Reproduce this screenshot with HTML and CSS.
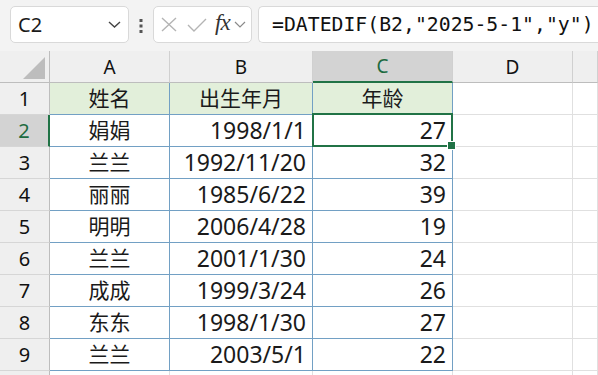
FILE: index.html
```html
<!DOCTYPE html>
<html lang="zh-CN">
<head>
  <meta charset="UTF-8">
  <meta name="viewport" content="width=device-width, initial-scale=1.0">
  <title>DATEDIF</title>
  <link rel="stylesheet" href="styles.css">
</head>
<body>

  <div class="toolbar">
    <div class="namebox">
      <span>C2</span>
      <svg class="chev" width="13" height="7" viewBox="0 0 13 7"><polyline points="1,1 6.5,6 12,1" fill="none" stroke="#444" stroke-width="1.4"/></svg>
    </div>
    <svg class="grip" width="4" height="14" viewBox="0 0 4 14">
      <rect x="0.5" y="0" width="3" height="3" fill="#555"/>
      <rect x="0.5" y="5.5" width="3" height="3" fill="#555"/>
      <rect x="0.5" y="11" width="3" height="3" fill="#555"/>
    </svg>
    <div class="fnbox">
      <svg width="16" height="15" viewBox="0 0 16 15"><path d="M1 1 L15 14 M15 1 L1 14" stroke="#b4b4b4" stroke-width="1.4" fill="none"/></svg>
      <svg class="ok" width="20" height="14" viewBox="0 0 20 14"><polyline points="1,7 7,13 19,1" fill="none" stroke="#b4b4b4" stroke-width="1.4"/></svg>
      <span class="fx">fx</span>
      <svg class="fx-chev" width="12" height="7" viewBox="0 0 12 7"><polyline points="1,1 6,6 11,1" fill="none" stroke="#8a8a8a" stroke-width="1.2"/></svg>
    </div>
    <div class="formula">=DATEDIF(B2,"2025-5-1","y")</div>
  </div>

  <div class="sheet">
    <!-- column headers -->
    <div class="hd corner"><span class="tri"></span></div>
    <div class="hd">A</div>
    <div class="hd">B</div>
    <div class="hd active">C</div>
    <div class="hd">D</div>
    <div class="hd"></div>

    <div class="rh">1</div>
    <div class="c t1 mid">姓名</div>
    <div class="c t1 mid">出生年月</div>
    <div class="c t1 mid">年龄</div>
    <div class="e"></div>
    <div class="e"></div>

    <div class="rh active">2</div>
    <div class="c mid">娟娟</div>
    <div class="c num">1998/1/1</div>
    <div class="c num sel">27</div>
    <div class="e"></div>
    <div class="e"></div>

    <div class="rh">3</div>
    <div class="c mid">兰兰</div>
    <div class="c num">1992/11/20</div>
    <div class="c num">32</div>
    <div class="e"></div>
    <div class="e"></div>

    <div class="rh">4</div>
    <div class="c mid">丽丽</div>
    <div class="c num">1985/6/22</div>
    <div class="c num">39</div>
    <div class="e"></div>
    <div class="e"></div>

    <div class="rh">5</div>
    <div class="c mid">明明</div>
    <div class="c num">2006/4/28</div>
    <div class="c num">19</div>
    <div class="e"></div>
    <div class="e"></div>

    <div class="rh">6</div>
    <div class="c mid">兰兰</div>
    <div class="c num">2001/1/30</div>
    <div class="c num">24</div>
    <div class="e"></div>
    <div class="e"></div>

    <div class="rh">7</div>
    <div class="c mid">成成</div>
    <div class="c num">1999/3/24</div>
    <div class="c num">26</div>
    <div class="e"></div>
    <div class="e"></div>

    <div class="rh">8</div>
    <div class="c mid">东东</div>
    <div class="c num">1998/1/30</div>
    <div class="c num">27</div>
    <div class="e"></div>
    <div class="e"></div>

    <div class="rh">9</div>
    <div class="c mid">兰兰</div>
    <div class="c num">2003/5/1</div>
    <div class="c num">22</div>
    <div class="e"></div>
    <div class="e"></div>

    <!-- row 10, only its top edge is on screen -->
    <div class="rh"></div>
    <div class="e"></div>
    <div class="e"></div>
    <div class="e"></div>
    <div class="e"></div>
    <div class="e"></div>
  </div>

</body>
</html>
```

FILE: styles.css
```css
body {
  margin: 0;
  background: #f3f3f3;
  font-family: 'Noto Sans', 'Noto Sans CJK SC', sans-serif;
  color: #1a1a1a;
  overflow: hidden;
}

.toolbar {
  height: 51px;
  box-sizing: border-box;
  padding: 6px 0 0 10px;
  display: flex;
  align-items: flex-start;
}

.namebox,
.fnbox,
.formula {
  height: 37px;
  box-sizing: border-box;
  background: #ffffff;
  border: 1px solid #d9d9d9;
  border-radius: 5px;
  display: flex;
  align-items: center;
}

.namebox {
  width: 119px;
  padding: 0 7px 0 7px;
  justify-content: space-between;
  font-size: 20px;
}

.grip {
  margin: 13px 10px 0 10px;
}

.fnbox {
  width: 99px;
  padding: 0 4px 0 7px;
}

.fnbox .ok {
  margin-left: 10px;
}

.fx {
  font-family: 'Liberation Serif', serif;
  font-style: italic;
  font-size: 23px;
  color: #333;
  margin: -3px 0 0 8px;
  letter-spacing: -1px;
}

.fx-chev {
  margin-left: 4px;
}

.formula {
  flex: 1;
  margin-left: 6px;
  padding-left: 13px;
  border-right: none;
  border-radius: 5px 0 0 5px;
  font-family: 'DejaVu Sans Mono', monospace;
  font-size: 19.8px;
  white-space: nowrap;
  color: #111;
}

.sheet {
  display: grid;
  grid-template-columns: 50px 120px 143px 140px 120px 1fr;
  grid-auto-rows: 32px;
  background: #ffffff;
  font-size: 23px;
}

.sheet > div {
  box-sizing: border-box;
  display: flex;
  align-items: center;
  line-height: 1;
}

.hd {
  background: #efefef;
  justify-content: center;
  font-size: 19px;
  color: #111;
  border-bottom: 1px solid #bdbdbd;
  border-right: 1px solid #d0d0d0;
  padding-top: 1px;
}

.hd.active {
  background: #d3d3d3;
  color: #1d6b40;
  border-bottom: 2px solid #217346;
}

.corner {
  position: relative;
  border-right-color: #bdbdbd;
}

.tri {
  position: absolute;
  right: 4px;
  bottom: 3px;
  width: 22px;
  height: 22px;
  background: #bdbdbd;
  clip-path: polygon(100% 0, 100% 100%, 0 100%);
}

.rh {
  background: #efefef;
  justify-content: center;
  font-size: 20px;
  color: #111;
  border-bottom: 1px solid #d6d6d6;
  border-right: 1px solid #bdbdbd;
}

.rh.active {
  background: #d3d3d3;
  color: #1d6b40;
  border-right: 2px solid #217346;
}

.c {
  border-right: 1px solid #72a0c4;
  border-bottom: 1px solid #72a0c4;
}

.e {
  border-right: 1px solid #e0e0e0;
  border-bottom: 1px solid #e0e0e0;
}

.t1 {
  background: #e2efda;
}

.mid {
  justify-content: center;
  font-size: 21px;
}

.num {
  justify-content: flex-end;
  padding-right: 6px;
}

.sel {
  position: relative;
}

.sel::after {
  content: "";
  position: absolute;
  top: -2px;
  left: -1px;
  right: -1px;
  bottom: -1px;
  border: 2px solid #217346;
}

.sel::before {
  content: "";
  position: absolute;
  right: -4px;
  bottom: -4px;
  width: 7px;
  height: 7px;
  background: #217346;
  border: 1px solid #ffffff;
  z-index: 1;
}
```
